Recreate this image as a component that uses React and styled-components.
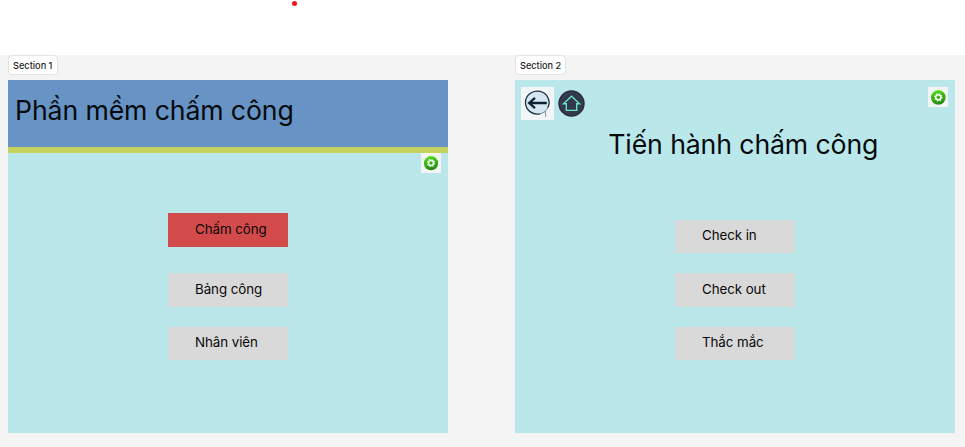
import React from 'react';
import styled, { createGlobalStyle } from 'styled-components';

const GlobalStyle = createGlobalStyle`
  * { box-sizing: border-box; }
  body { margin: 0; background: #fff; font-family: Inter, sans-serif; color: #050a0c; overflow: hidden; }
`;

const Page = styled.div`
  display: flex;
  flex-direction: column;
  width: 965px;
  height: 447px;
`;

const TopStrip = styled.header`
  flex: none;
  height: 55px;
  padding-left: 291.5px;
`;

const Dot = styled.div`
  width: 5px;
  height: 5px;
  margin-top: 0.5px;
  border-radius: 50%;
  background: #f3121d;
`;

const Canvas = styled.main`
  flex: 1;
  display: flex;
  gap: 66.7px;
  padding-left: 8px;
  background: #f4f4f4;
`;

const Section = styled.section`
  width: 440.3px;
`;

const SectionLabel = styled.div`
  width: ${(p) => p.$width}px;
  height: 20px;
  margin-bottom: 5px;
  padding-left: 4px;
  border: 1px solid #e3e3e3;
  border-radius: 4px;
  background: #fff;
  color: #1e1e1e;
  font-size: 9.2px;
  font-weight: 500;
  line-height: 19px;
  white-space: nowrap;
`;

const Frame = styled.div`
  display: flex;
  flex-direction: column;
  height: 353.4px;
  background: #bae7ea;
`;

const Banner = styled.div`
  flex: none;
  height: 73.4px;
  padding: 14px 0 0 7px;
  border-bottom: 6.4px solid #c5d25d;
  background: #6893c5;
`;

const Title = styled.h1`
  margin: 0;
  font-size: 26.67px;
  font-weight: 400;
  letter-spacing: -0.12px;
  line-height: 32px;
  white-space: nowrap;
`;

const ScreenTitle = styled(Title)`
  margin: 8px 0 0 93.3px;
`;

const Toolbar = styled.div`
  display: flex;
  align-items: flex-start;
  gap: 4px;
  padding: 6.5px 7px 0 6.5px;
`;

const SettingsRow = styled.div`
  display: flex;
  justify-content: flex-end;
  padding-right: 6.9px;
`;

const IconButton = styled.button`
  display: flex;
  width: ${(p) => p.$size}px;
  height: ${(p) => p.$size}px;
  margin: ${(p) => p.$margin || '0'};
  padding: 0;
  border: 0;
  background: ${(p) => p.$fill || 'transparent'};
`;

const Menu = styled.nav`
  display: flex;
  flex-direction: column;
  gap: 20.2px;
  padding: ${(p) => p.$top}px 0 0 160px;
`;

const MenuButton = styled.button`
  width: 120px;
  height: 33.3px;
  margin: 0 0 ${(p) => p.$after || 0}px;
  padding: 0 0 ${(p) => p.$lift || 2}px 27px;
  border: 0;
  background: ${(p) => (p.$active ? '#d34a4b' : '#d9d9d9')};
  color: #080808;
  font: 400 13.33px/16px Inter, sans-serif;
  letter-spacing: -0.06px;
  text-align: left;
  white-space: nowrap;
`;

function GearIcon() {
  return (
    <svg width="100%" height="100%" viewBox="0 0 20 20">
      <defs>
        <linearGradient id="leaf" x1="0" y1="0" x2="0.3" y2="1">
          <stop offset="0" stopColor="#5ee320" />
          <stop offset="0.5" stopColor="#3bb414" />
          <stop offset="1" stopColor="#278b12" />
        </linearGradient>
      </defs>
      <circle cx="10" cy="10.2" r="7.1" fill="url(#leaf)" />
      <path d="M3.8 7.4A7 7 0 0 1 15.5 5.8" fill="none" stroke="#7eea4c" strokeWidth="0.8" />
      <circle cx="10" cy="10" r="2.5" fill="none" stroke="#f0fff0" strokeWidth="1.5" />
      <circle cx="10" cy="10" r="3.6" fill="none" stroke="#f0fff0" strokeWidth="1.1" strokeDasharray="1.3 1.527" />
    </svg>
  );
}

function BackIcon() {
  return (
    <svg width="100%" height="100%" viewBox="0 0 33 33">
      <ellipse cx="16.5" cy="15.6" rx="11.8" ry="11.5" fill="#d4e6ef" />
      <path d="M19 26.8A11.8 11.5 0 1 1 26.8 20.8" fill="none" stroke="#1d3042" strokeWidth="1.3" />
      <path d="M26.8 20.8c-.8 1.6-1.8 2.8-2.6 3.4-.6.8.9 2.7.5 5.5M19 26.8c2-.4 3.7-1.2 5-2.4" fill="none" stroke="#657b8b" strokeWidth="0.9" />
      <path d="M25.8 16H8.6M14 10.9L8.2 16l5.8 5.1" fill="none" stroke="#0b2234" strokeWidth="2.3" />
    </svg>
  );
}

function HomeIcon() {
  return (
    <svg width="100%" height="100%" viewBox="0 0 27 27">
      <circle cx="13.5" cy="13.5" r="13.2" fill="#292f40" />
      <circle cx="13.5" cy="13.5" r="11" fill="#33374d" stroke="#464b5e" strokeWidth="0.6" />
      <path d="M8.3 13.8v6.6h10.4v-6.6h2.8l-8-7.5-8 7.5z" fill="none" stroke="#66e5bf" strokeWidth="1.4" />
    </svg>
  );
}

export default function App() {
  return (
    <Page>
      <GlobalStyle />
      <TopStrip><Dot /></TopStrip>
      <Canvas>
        <Section>
          <SectionLabel $width={50}>Section 1</SectionLabel>
          <Frame>
            <Banner><Title>Phần mềm chấm công</Title></Banner>
            <SettingsRow>
              <IconButton $size={20} $fill="#f2f5f4" aria-label="Settings"><GearIcon /></IconButton>
            </SettingsRow>
            <Menu $top={40}>
              <MenuButton $active $after={6.5}>Chấm công</MenuButton>
              <MenuButton>Bảng công</MenuButton>
              <MenuButton $lift={4}>Nhân viên</MenuButton>
            </Menu>
          </Frame>
        </Section>
        <Section>
          <SectionLabel $width={51}>Section 2</SectionLabel>
          <Frame>
            <Toolbar>
              <IconButton $size={33} $fill="#f3f6f7" aria-label="Back"><BackIcon /></IconButton>
              <IconButton $size={27} $margin="3.5px 0 0" aria-label="Home"><HomeIcon /></IconButton>
              <IconButton $size={20.6} $margin="0 0 0 auto" $fill="#f2f5f4" aria-label="Settings"><GearIcon /></IconButton>
            </Toolbar>
            <ScreenTitle>Tiến hành chấm công</ScreenTitle>
            <Menu $top={60.5}>
              <MenuButton $lift={4}>Check in</MenuButton>
              <MenuButton>Check out</MenuButton>
              <MenuButton $lift={4}>Thắc mắc</MenuButton>
            </Menu>
          </Frame>
        </Section>
      </Canvas>
    </Page>
  );
}
